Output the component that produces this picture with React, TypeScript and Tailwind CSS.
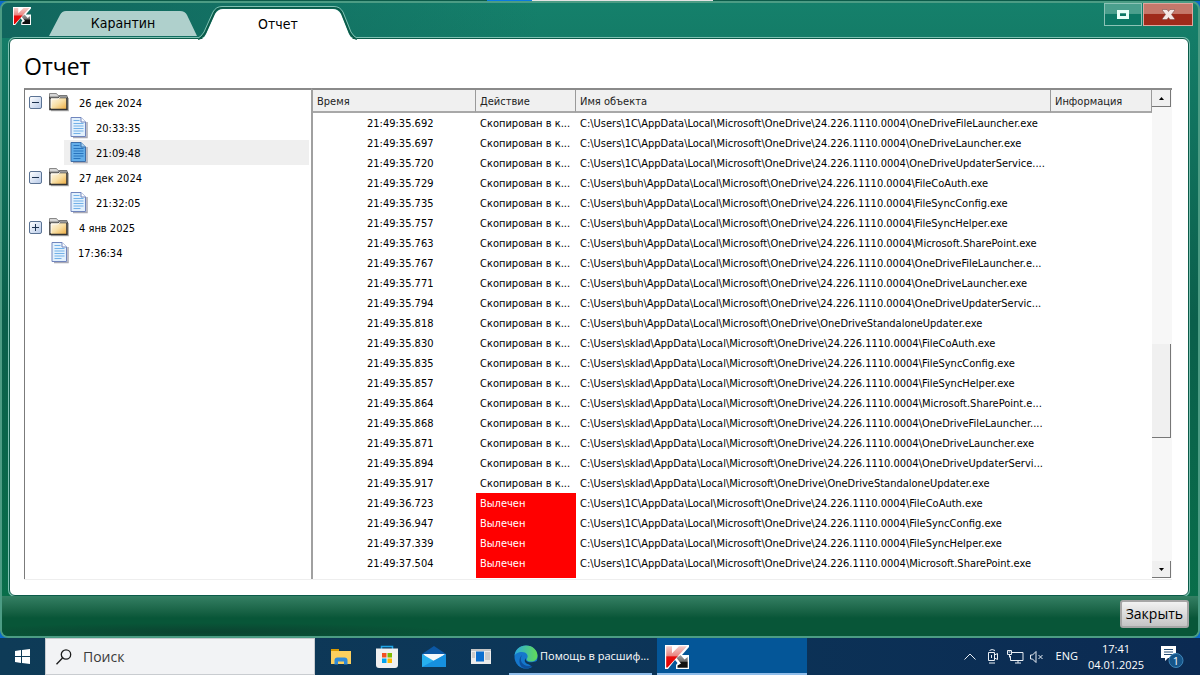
import { useState } from 'react';

const LOCAL = 'C:\\Users\\';
const ONEDRIVE = '\\AppData\\Local\\Microsoft\\OneDrive\\';
const VERSION = '24.226.1110.0004\\';

const path = (user: string, file: string, version = VERSION) => LOCAL + user + ONEDRIVE + version + file;

const rows = [
  { time: '21:49:35.692', name: path('1C', 'OneDriveFileLauncher.exe') },
  { time: '21:49:35.697', name: path('1C', 'OneDriveLauncher.exe') },
  { time: '21:49:35.720', name: path('1C', 'OneDriveUpdaterService....') },
  { time: '21:49:35.729', name: path('buh', 'FileCoAuth.exe') },
  { time: '21:49:35.735', name: path('buh', 'FileSyncConfig.exe') },
  { time: '21:49:35.757', name: path('buh', 'FileSyncHelper.exe') },
  { time: '21:49:35.763', name: path('buh', 'Microsoft.SharePoint.exe') },
  { time: '21:49:35.767', name: path('buh', 'OneDriveFileLauncher.e...') },
  { time: '21:49:35.771', name: path('buh', 'OneDriveLauncher.exe') },
  { time: '21:49:35.794', name: path('buh', 'OneDriveUpdaterServic...') },
  { time: '21:49:35.818', name: path('buh', 'OneDriveStandaloneUpdater.exe', '') },
  { time: '21:49:35.830', name: path('sklad', 'FileCoAuth.exe') },
  { time: '21:49:35.835', name: path('sklad', 'FileSyncConfig.exe') },
  { time: '21:49:35.857', name: path('sklad', 'FileSyncHelper.exe') },
  { time: '21:49:35.864', name: path('sklad', 'Microsoft.SharePoint.e...') },
  { time: '21:49:35.868', name: path('sklad', 'OneDriveFileLauncher....') },
  { time: '21:49:35.871', name: path('sklad', 'OneDriveLauncher.exe') },
  { time: '21:49:35.894', name: path('sklad', 'OneDriveUpdaterServi...') },
  { time: '21:49:35.917', name: path('sklad', 'OneDriveStandaloneUpdater.exe', '') },
  { time: '21:49:36.723', name: path('1C', 'FileCoAuth.exe'), cured: true },
  { time: '21:49:36.947', name: path('1C', 'FileSyncConfig.exe'), cured: true },
  { time: '21:49:37.339', name: path('1C', 'FileSyncHelper.exe'), cured: true },
  { time: '21:49:37.504', name: path('1C', 'Microsoft.SharePoint.exe'), cured: true },
];

const tree = [
  { label: '26 дек 2024', open: true, items: ['20:33:35', '21:09:48'] },
  { label: '27 дек 2024', open: true, items: ['21:32:05'] },
  { label: '4 янв 2025', open: false, items: [] },
];

function KasperskyLogo({ className }: { className: string }) {
  return (
    <svg className={className} viewBox="0 0 24 24" aria-hidden="true">
      <defs>
        <linearGradient id="k-red" x1="0" y1="0" x2="0" y2="1">
          <stop offset="0" stopColor="#f6cdca" />
          <stop offset="0.45" stopColor="#e88480" />
          <stop offset="0.5" stopColor="#e60d0d" />
          <stop offset="1" stopColor="#e60000" />
        </linearGradient>
        <linearGradient id="k-dark" x1="0" y1="0" x2="0" y2="1">
          <stop offset="0" stopColor="#a5a5a5" />
          <stop offset="0.5" stopColor="#6a6a6a" />
          <stop offset="0.55" stopColor="#111" />
          <stop offset="1" stopColor="#111" />
        </linearGradient>
      </defs>
      <path d="M0 0h24v2l-7 8h7v14H11v-4l1.500-2-2.500-3-7 9H0z" fill="#fff" />
      <path d="M1.200 1.200h5.800v7l7-7h8L2.500 22.500H1.200z" fill="url(#k-red)" />
      <path d="M11.500 13l4-3 4 4.500 3.200-2.500v10.700H12.500v-2.200l3.500-2z" fill="url(#k-dark)" />
    </svg>
  );
}

function FolderIcon() {
  return (
    <svg className="h-5 w-5 shrink-0" viewBox="0 0 20 20" aria-hidden="true">
      <defs>
        <linearGradient id="folder" x1="0" y1="0" x2="1" y2="1">
          <stop offset="0" stopColor="#fffaf0" />
          <stop offset="0.5" stopColor="#f8dfa5" />
          <stop offset="1" stopColor="#eda93a" />
        </linearGradient>
      </defs>
      <path d="M2 17.500h17.500V5" fill="none" stroke="#b5b5b5" strokeWidth="1.500" />
      <path d="M.5 3V.5h7L9 2.500h9V5H.5z" fill="#d6d6d6" stroke="#888" />
      <path d="M1 4.500h17V16.500H1z" fill="url(#folder)" stroke="#333" strokeWidth="1.600" />
      <path d="M2 15V6h7l2-2h7" fill="none" stroke="#fff" strokeOpacity=".8" />
      <path d="M1 4.500h8l2-1.500h7" fill="none" stroke="#666" />
    </svg>
  );
}

function FileIcon({ active = false }: { active?: boolean }) {
  return (
    <svg className="h-[22px] w-[18px] shrink-0" viewBox="0 0 18 22" aria-hidden="true">
      <path d="M3 20.500h14V5" fill="none" stroke="#a9a9b4" strokeWidth="1.500" />
      <path d="M1 .5h10l4.500 4.500V19.500H1z" fill={active ? '#64aee9' : '#e2f0fc'} stroke={active ? '#3d6ea8' : '#7085bd'} />
      <path d="M11 .5v4.500h4.500" fill={active ? '#a4d2f5' : '#fff'} stroke={active ? '#3d6ea8' : '#7085bd'} />
      <path d="M3.500 3.500h6M3.500 6.500h10M3.500 9h10M3.500 11.500h10M3.500 14h10M3.500 16.500h7" stroke={active ? '#2874bd' : '#72b1e8'} />
    </svg>
  );
}

function Toggle({ open, onClick }: { open: boolean; onClick: () => void }) {
  return (
    <button
      type="button"
      onClick={onClick}
      aria-label={open ? 'Свернуть' : 'Развернуть'}
      className="flex h-[13px] w-[13px] shrink-0 items-center justify-center rounded-[2px] border border-[#5b7394] bg-linear-to-br from-white to-[#b9cbe8]"
    >
      <svg className="h-[7px] w-[7px]" viewBox="0 0 7 7" aria-hidden="true">
        <path d={open ? 'M0 3.500h7' : 'M0 3.500h7M3.500 0v7'} stroke="#1d3350" />
      </svg>
    </button>
  );
}

function Tree() {
  const [selected, setSelected] = useState('21:09:48');
  const [groups, setGroups] = useState(tree);

  const toggle = (label: string) =>
    setGroups(groups.map(g => (g.label === label ? { ...g, open: !g.open } : g)));

  return (
    <nav className="w-[287px] shrink-0 border-t-2 border-l border-t-[#8a8a8a] border-l-[#7b7b7b] pr-[2px] text-[11px]">
      <ul>
        {groups.map(group => (
          <li key={group.label}>
            <div className="flex h-[25px] items-center pl-1">
              <Toggle open={group.open} onClick={() => toggle(group.label)} />
              <span className="w-[7px]" />
              <FolderIcon />
              <span className="pt-[3px] pl-[10px]">{group.label}</span>
            </div>
            {group.open && group.items.map(item => (
              <div key={item} className="pl-[39px]">
                <button
                  type="button"
                  onClick={() => setSelected(item)}
                  className={`flex h-[25px] w-full items-center gap-2 pl-[6px] ${selected === item ? 'bg-[#efefef]' : ''}`}
                >
                  <FileIcon active={selected === item} />
                  <span className="pt-[3px]">{item}</span>
                </button>
              </div>
            ))}
          </li>
        ))}
        <li>
          <button type="button" className="flex h-[25px] items-center gap-[9px] pl-[26px]">
            <FileIcon />
            <span className="pt-[3px]">17:36:34</span>
          </button>
        </li>
      </ul>
    </nav>
  );
}

function ScrollBar() {
  const key = 'flex h-[17px] w-[19px] shrink-0 items-center justify-center border-r border-b border-[#777] bg-[#f0f0f0]';
  return (
    <div className="flex w-5 shrink-0 flex-col bg-[#f7f7f7] pr-px">
      <button type="button" aria-label="Вверх" className={key}>
        <svg className="h-[3px] w-[5px]" viewBox="0 0 5 3"><path d="M0 3h5L2.500 0z" /></svg>
      </button>
      <div className="grow-[238]" />
      <div className="grow-[93] border-r border-b border-[#777] bg-[#f0f0f0]" />
      <div className="grow-[124]" />
      <button type="button" aria-label="Вниз" className={key}>
        <svg className="h-[3px] w-[5px]" viewBox="0 0 5 3"><path d="M0 0h5L2.500 3z" /></svg>
      </button>
    </div>
  );
}

function Report() {
  const th = 'h-[23px] border-r border-b-2 border-r-[#9a9a9a] border-b-[#a8a8a8] bg-[#f0f0f0] px-1 pt-[3px] pb-0 text-left font-normal text-[#222]';
  return (
    <section className="flex min-w-0 flex-1 border-t-2 border-l-2 border-t-[#8a8a8a] border-l-[#a0a0a0] pb-px">
      <div className="h-0 min-h-full min-w-0 flex-1 overflow-hidden">
        <table className="w-full table-fixed border-separate border-spacing-0 text-[11px]">
          <colgroup>
            <col className="w-[163px]" />
            <col className="w-[100px]" />
            <col />
            <col className="w-[101px]" />
          </colgroup>
          <thead>
            <tr>
              <th className={th}>Время</th>
              <th className={th}>Действие</th>
              <th className={th}>Имя объекта</th>
              <th className={th}>Информация</th>
            </tr>
          </thead>
          <tbody>
            {rows.map(row => (
              <tr key={row.time} className="h-5">
                <td className="truncate p-0 pt-[2px] pl-[54px]">{row.time}</td>
                <td className={row.cured ? 'truncate bg-[#ff0000] p-0 pt-[2px] pl-1 text-white' : 'truncate p-0 pt-[2px] pl-1'}>
                  {row.cured ? 'Вылечен' : 'Скопирован в к...'}
                </td>
                <td className="overflow-hidden p-0 pt-[2px] pl-1 whitespace-nowrap">{row.name}</td>
                <td />
              </tr>
            ))}
            <tr className="h-5">
              <td />
              <td className="bg-[#ff0000]" />
              <td />
              <td />
            </tr>
          </tbody>
        </table>
      </div>
      <ScrollBar />
    </section>
  );
}

function TitleBar() {
  return (
    <header className="-mx-[7px] flex h-[35px] shrink-0 items-start rounded-t-md bg-linear-to-r from-[#11665e] to-transparent to-45% pl-[7px]">
      <KasperskyLogo className="mt-1 ml-1 h-[18px] w-[18px]" />
      <div role="tablist" className="ml-[17px] flex self-end">
        <button type="button" role="tab" aria-selected="false" className="relative h-[26px] w-[150px] text-sm leading-[26px]">
          <svg className="absolute inset-0 h-full w-full" viewBox="0 0 150 26" aria-hidden="true">
            <path d="M1 26L12 5Q14 1 18 1H132Q137 1 139 5L149 26z" fill="#afd0cc" />
          </svg>
          <span className="relative">Карантин</span>
        </button>
        <button type="button" role="tab" aria-selected="true" className="relative h-[28px] w-[160px] self-end text-sm leading-[28px]">
          <svg className="absolute inset-x-0 -top-1 h-[35px] w-full" viewBox="0 0 160 35" aria-hidden="true">
            <path d="M0 34Q5 34 8 28L17 8Q20 3 25 3H135Q140 3 143 8L151 28Q154 34 159 34V35H0z" fill="#fff" />
            <path d="M0 33Q4 32 7 27L16 7Q19 1.500 24 1.500H136Q141 1.500 144 7L152 27Q155 32 159 33" fill="none" stroke="#0b5b49" strokeWidth="2" />
            <path d="M0 32Q3 31 6 26L15 6Q18 .5 24 .5H136Q142 .5 145 6L153 26Q156 31 159 32" fill="none" stroke="#80c2b3" />
          </svg>
          <span className="relative">Отчет</span>
        </button>
      </div>
      <div className="mr-[5px] ml-auto flex gap-px">
        <button type="button" aria-label="Развернуть" className="flex h-[23px] w-[38px] items-center justify-center border border-[#8cc3b6] bg-linear-to-b from-[#4b9f8d] from-45% to-[#0d7865] to-50%">
          <span className="h-[9px] w-3 border-[3px] border-[#eafff8]" />
        </button>
        <button type="button" aria-label="Закрыть окно" className="flex h-[23px] w-[50px] items-center justify-center border border-[#dfa79f] bg-linear-to-b from-[#c5786b] from-45% to-[#9f2a1b] to-50%">
          <svg className="h-[11px] w-[13px]" viewBox="0 0 13 11" aria-hidden="true">
            <path d="M.5 .5h4.500l1.500 2L8 .5h4.500v1L9.500 5.500l3 4v1H8l-1.500-2-1.500 2H.5v-1l3-4-3-4z" fill="#f4e6e4" stroke="#6e433e" strokeWidth=".5" />
          </svg>
        </button>
      </div>
    </header>
  );
}

function Tray() {
  return (
    <div className="ml-auto flex h-full items-center text-[11px] text-white">
      <svg className="h-3 w-3" viewBox="0 0 12 12" fill="none" stroke="#e8eef4" aria-hidden="true"><path d="M.5 8.500L6 3l5.500 5.500" /></svg>
      <svg className="ml-[11px] h-[15px] w-3" viewBox="0 0 12 15" fill="none" stroke="#e8eef4" aria-hidden="true">
        <path d="M1.500 3.500h6v8h-6zM7.500 6l3-1.500v6l-3-1.500M2.500 1.500Q5-.5 8 1.500M2 14h6M4.500 6v3" />
      </svg>
      <svg className="ml-2 h-[14px] w-[17px]" viewBox="0 0 17 14" fill="none" stroke="#e8eef4" aria-hidden="true">
        <path d="M5 2.500h11v8H3.500V6M8 13h6M11 10.500V13M.5.500h4v4h-4zM2.500 4.500v3M1.500 2h2" />
      </svg>
      <svg className="ml-[6px] h-3 w-[14px]" viewBox="0 0 14 12" fill="none" stroke="#e8eef4" aria-hidden="true">
        <path d="M.5 4h2L6 .5v11L2.500 8h-2zM8.500 4l4 4M12.500 4l-4 4" />
      </svg>
      <span className="ml-3">ENG</span>
      <div className="ml-[10px] flex w-[56px] flex-col items-center leading-4">
        <span>17:41</span>
        <span>04.01.2025</span>
      </div>
      <button type="button" aria-label="Уведомления" className="relative mr-4 ml-4 h-6 w-6">
        <svg className="h-6 w-6" viewBox="0 0 24 24" aria-hidden="true">
          <path d="M1 1h15v12H8l-3 3v-3H1z" fill="#fff" />
          <path d="M4 4.500h9M4 7h9M4 9.500h9" stroke="#234b73" />
          <circle cx="16" cy="15.500" r="7" fill="#165589" stroke="#3f86b9" />
        </svg>
        <span className="absolute top-2 left-3 w-2 text-center leading-4">1</span>
      </button>
    </div>
  );
}

function Taskbar() {
  return (
    <footer className="flex h-[37px] shrink-0 items-center bg-linear-to-r from-[#0e3b57] via-[#0c3558] to-[#0b2a52] font-['Open_Sans','Noto_Sans',sans-serif]">
      <button type="button" aria-label="Пуск" className="flex h-full w-[45px] items-center justify-center">
        <svg className="h-[15px] w-[15px]" viewBox="0 0 15 15" fill="#fff" aria-hidden="true">
          <path d="M0 2l6-1v6H0zM7 .900L15 0v7H7zM0 8h6v6l-6-1zM7 8h8v7l-8-1z" />
        </svg>
      </button>
      <label className="flex h-full w-[270px] items-center border border-[#c9ccd0] bg-[#f2f3f5] pl-[10px]">
        <svg className="h-4 w-4 shrink-0" viewBox="0 0 16 16" fill="none" stroke="#1b1b1b" strokeWidth="1.300" aria-hidden="true">
          <circle cx="10" cy="5.500" r="4.700" />
          <path d="M6.500 9L.5 15.300" />
        </svg>
        <input type="text" placeholder="Поиск" aria-label="Поиск" className="ml-[11px] min-w-0 flex-1 bg-transparent text-sm outline-none placeholder:text-[#3b3b3b]" />
      </label>
      <button type="button" aria-label="Проводник" className="ml-4 h-[22px] w-5">
        <svg className="h-full w-full" viewBox="0 0 20 22" aria-hidden="true">
          <path d="M0 3h8v4H0z" fill="#d99a00" />
          <path d="M0 5h20v13H0z" fill="#fcd05e" />
          <path d="M3.500 18.500v-4q0-3 3-3h7q3 0 3 3v4h-3.500v-3H7v3z" fill="#2f8ad8" />
        </svg>
      </button>
      <button type="button" aria-label="Магазин" className="ml-[25px] h-6 w-[22px]">
        <svg className="h-full w-full" viewBox="0 0 22 24" aria-hidden="true">
          <path d="M5.500 4V1.500h11V4" fill="none" stroke="#1fa6e8" strokeWidth="1.500" />
          <path d="M0 3.500h22V20q0 3-3 3H3q-3 0-3-3z" fill="#f0f0f0" />
          <path d="M6 8h4.500v4.500H6z" fill="#f25022" />
          <path d="M11.500 8H16v4.500h-4.500z" fill="#7fba00" />
          <path d="M6 13.500h4.500V18H6z" fill="#00a4ef" />
          <path d="M11.500 13.500H16V18h-4.500z" fill="#ffb900" />
        </svg>
      </button>
      <button type="button" aria-label="Почта" className="ml-6 h-[22px] w-6">
        <svg className="h-full w-full" viewBox="0 0 24 22" aria-hidden="true">
          <path d="M0 8L12 0l12 8v3H0z" fill="#0c58a4" />
          <path d="M1 8h22l-7 8H8z" fill="#f4f8fb" />
          <path d="M0 8l12 7 12-7v13H0z" fill="#27b0ef" />
          <path d="M0 21L24 8v13z" fill="#1690df" />
        </svg>
      </button>
      <button type="button" aria-label="Новости" className="ml-[25px] h-[15px] w-5">
        <svg className="h-full w-full" viewBox="0 0 20 15" aria-hidden="true">
          <path d="M0 0h20v15H0z" fill="#ececec" />
          <path d="M0 0h20v2H0z" fill="#c5c5c5" />
          <path d="M5 2.500h8v10H5z" fill="#0b6fd0" />
          <path d="M1 4h3M1 6h3M1 8h3M14 4h5M14 6h5M14 8h5M14 10h5" stroke="#aaa" />
        </svg>
      </button>
      <button type="button" className="ml-[18px] flex h-full w-[143px] items-center gap-[2px] border-b-2 border-[#8fbdea] pt-[2px] pl-[5px] text-[11px] text-white">
        <svg className="h-6 w-6 shrink-0" viewBox="0 0 24 24" aria-hidden="true">
          <defs>
            <linearGradient id="edge" x1="0" y1="0" x2="1" y2="0">
              <stop offset="0" stopColor="#2aa9df" />
              <stop offset="1" stopColor="#63dc55" />
            </linearGradient>
          </defs>
          <circle cx="12" cy="12" r="11.500" fill="#1577cc" />
          <path d="M.5 11C1 4.500 6 .5 12 .5c7 0 11.500 5 11.500 10 0 4-3 6-6.500 6s-5-1.500-4-3c2-3-.5-6.500-5-6.500C4 7 1 9 .5 11z" fill="url(#edge)" />
          <path d="M8 10c-3 5 0 11 7 11 2.500 0 5-1 6.500-3-3 5.500-9 6-13 4.500C5 20 4 14 8 10z" fill="#0d4f9c" />
          <path d="M12 13c-1.500 3 3 5.500 9.500 3.500l2.500-1v4l-4 3c-1 0-3-2-5-3-4-1-5.500-4-3-6.500z" fill="#0d3558" />
        </svg>
        <span className="whitespace-nowrap">Помощь в расшиф...</span>
      </button>
      <button type="button" aria-label="Kaspersky" className="ml-[5px] flex h-full w-[150px] items-center border-b-2 border-[#8fbdea] bg-[#045698] pt-[2px] pl-2">
        <KasperskyLogo className="h-6 w-6" />
      </button>
      <Tray />
    </footer>
  );
}

export default function App() {
  return (
    <div className="flex h-screen flex-col overflow-hidden bg-[#0b6ac8] font-['DejaVu_Sans_Condensed','Open_Sans',sans-serif] text-black">
      {/* edge of the window behind */}
      <div className="flex h-px shrink-0 bg-[#0b5b49] pl-[487px]">
        <span className="w-[45px] bg-[#0a7be0]" />
        <span className="w-[181px] bg-[#e3e3e3]" />
      </div>
      <div className="flex min-h-0 flex-1 flex-col rounded-lg border-2 border-[#4c9c84] bg-linear-to-b from-[#15806b] via-[#0b5f4b] to-[#08704a] px-[7px]">
        <TitleBar />
        <main className="mr-[2px] flex min-h-0 flex-1 flex-col rounded-md border border-[#0b5b49] bg-white pr-4 pb-[15px] pl-[14px] ring-1 ring-[#80c2b3]">
          <h1 className="mt-[11px] mb-[6px] font-['Open_Sans',sans-serif] text-[23px] leading-8">Отчет</h1>
          <div className="flex min-h-0 flex-1 border-b border-[#eee]">
            <Tree />
            <Report />
          </div>
        </main>
        <div className="-mx-[7px] shrink-0 rounded-b-md bg-linear-to-b from-[#348064] to-[#085638] to-55%">
          <div className="flex h-10 items-start justify-end rounded-b-md bg-[radial-gradient(ellipse_at_17%_90%,#0b4330,transparent_18%)] pt-1 pr-[9px]">
            <button type="button" className="h-7 rounded-[3px] border-2 border-[#a6a6a6] bg-linear-to-b from-[#f2f2f2] to-[#c4c4c4] px-1 font-['Open_Sans',sans-serif] text-sm leading-6">Закрыть</button>
          </div>
        </div>
      </div>
      <Taskbar />
    </div>
  );
}
